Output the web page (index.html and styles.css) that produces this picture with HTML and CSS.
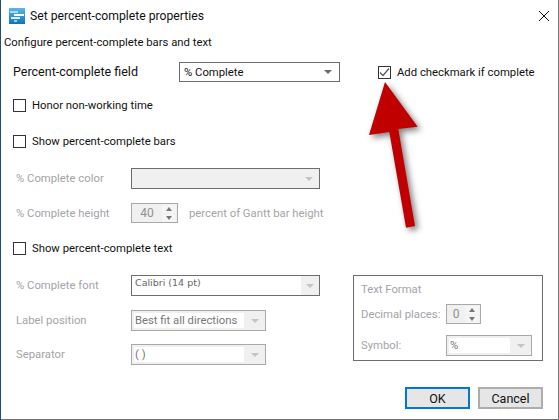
FILE: index.html
```html
<!DOCTYPE html>
<html lang="en">
<head>
    <meta charset="UTF-8">
    <title>Set percent-complete properties</title>
    <link rel="stylesheet" href="styles.css">
</head>
<body>
    <div class="dialog">
        <div class="title-bar">
            <svg class="app-icon" width="16" height="16" viewBox="0 0 16 16">
                <defs>
                    <linearGradient id="iconBlue" x1="0" y1="0" x2="0" y2="1">
                        <stop offset="0" stop-color="#5cb8ea"/>
                        <stop offset="1" stop-color="#0f74b8"/>
                    </linearGradient>
                </defs>
                <rect width="16" height="16" fill="url(#iconBlue)"/>
                <rect x="1" y="3" width="8" height="2" fill="#a9dbf5"/>
                <rect x="5" y="6" width="10" height="2" fill="#ffffff"/>
                <rect x="2" y="9" width="9" height="2" fill="#d8eefa"/>
                <rect x="5" y="12" width="3" height="2" fill="#8fcdf0"/>
            </svg>
            <span class="title-text">Set percent-complete properties</span>
            <svg class="close-icon" width="10" height="10" viewBox="0 0 10 10">
                <path d="M0 0L10 10M10 0L0 10" stroke="#111" stroke-width="1" fill="none"/>
            </svg>
        </div>

        <p class="intro">Configure percent-complete bars and text</p>

        <div class="field-row">
            <span class="field-label">Percent-complete field</span>
            <div class="select select-field">
                <span class="select-value">% Complete</span>
                <span class="select-arrow dark"></span>
            </div>
            <label class="check check-right">
                <span class="box">
                    <svg width="11" height="11" viewBox="0 0 11 11"><path d="M1 5.5L4 8.5L10 1.5" stroke="#555" stroke-width="1.2" fill="none"/></svg>
                </span>
                Add checkmark if complete
            </label>
        </div>

        <label class="check honor-row"><span class="box"></span>Honor non-working time</label>
        <label class="check bars-row"><span class="box"></span>Show percent-complete bars</label>

        <div class="row color-row">
            <span class="row-label">% Complete color</span>
            <div class="select select-wide disabled-fill"><span class="select-value"></span><span class="select-arrow"></span></div>
        </div>

        <div class="row height-row">
            <span class="row-label">% Complete height</span>
            <div class="spinner spinner-height">
                <span class="spinner-value">40</span>
                <span class="spinner-btns"><i class="up"></i><i class="down"></i></span>
            </div>
            <span class="muted height-note">percent of Gantt bar height</span>
        </div>

        <label class="check text-row"><span class="box"></span>Show percent-complete text</label>

        <div class="lower">
            <div class="lower-left">
                <div class="row">
                    <span class="row-label">% Complete font</span>
                    <div class="select select-wide font-select">
                        <span class="select-value font-value">Calibri (14 pt)</span>
                        <span class="arrow-cell"><span class="select-arrow"></span></span>
                    </div>
                </div>
                <div class="row position-row">
                    <span class="row-label">Label position</span>
                    <div class="select select-mid gray-border">
                        <span class="select-value inset">Best fit all directions</span>
                        <span class="select-arrow"></span>
                    </div>
                </div>
                <div class="row separator-row">
                    <span class="row-label">Separator</span>
                    <div class="select select-mid gray-border">
                        <span class="select-value inset">( )</span>
                        <span class="select-arrow"></span>
                    </div>
                </div>
            </div>

            <div class="group-box">
                <div class="group-title">Text Format</div>
                <div class="group-row">
                    <span class="group-label">Decimal places:</span>
                    <div class="spinner spinner-decimal">
                        <span class="spinner-value">0</span>
                        <span class="spinner-btns"><i class="up"></i><i class="down"></i></span>
                    </div>
                </div>
                <div class="group-row symbol-row">
                    <span class="group-label">Symbol:</span>
                    <div class="select select-symbol gray-border">
                        <span class="select-value inset">%</span>
                        <span class="select-arrow"></span>
                    </div>
                </div>
            </div>
        </div>

        <div class="buttons">
            <button class="btn btn-ok">OK</button>
            <button class="btn btn-cancel">Cancel</button>
        </div>

        <!-- annotation drawn over the dialog -->
        <svg class="arrow" width="60" height="160" viewBox="0 0 60 160">
            <polygon points="25,2 57.7,46.7 38.3,49 55,146 46,147.7 29.3,52 9,55" fill="#c00000"/>
        </svg>
    </div>
</body>
</html>
```

FILE: styles.css
```css
* {
    box-sizing: border-box;
}

body {
    margin: 0;
    width: 559px;
    height: 420px;
    overflow: hidden;
    background-color: #1b5270;
    font-family: Roboto, Arial, sans-serif;
    font-size: 11.3px;
    color: #111;
}

.dialog {
    position: relative;
    margin-left: 1px;
    width: 558px;
    height: 420px;
    background-color: #fff;
    border-right: 1px solid #7a7a7a;
    border-bottom: 1px solid #6f6f6f;
}

.title-bar {
    display: flex;
    align-items: center;
    height: 31px;
    padding-left: 8px;
}

.app-icon {
    flex: none;
}

.title-text {
    margin-left: 5px;
    font-size: 12.2px;
}

.close-icon {
    margin-left: auto;
    margin-right: 9px;
}

.intro {
    margin: 4px 0 0 3px;
    height: 16px;
    line-height: 16px;
}

.field-row {
    display: flex;
    align-items: center;
    margin-top: 11px;
    padding-left: 12px;
    height: 20px;
}

.field-label {
    width: 166px;
    margin-top: -1px;
    font-size: 12.5px;
}

.select {
    display: flex;
    align-items: center;
    height: 21px;
    border: 1px solid #6d6d6d;
    background-color: #fff;
}

.select-value {
    flex: 1;
    padding-left: 4px;
    white-space: nowrap;
}

.select-arrow {
    width: 0;
    height: 0;
    margin-right: 6px;
    border-left: 4px solid transparent;
    border-right: 4px solid transparent;
    border-top: 4px solid #c4c4c4;
}

.select-arrow.dark {
    border-top-color: #6a6a6a;
    margin-right: 7px;
}

.select-field {
    width: 161px;
    height: 20px;
}

.check {
    display: flex;
    align-items: center;
    height: 13px;
    margin-left: 12px;
}

.box {
    display: flex;
    align-items: center;
    justify-content: center;
    width: 13px;
    height: 13px;
    margin-right: 6px;
    border: 1px solid #333;
    background-color: #fff;
}

.check-right {
    margin-left: 38px;
}

.honor-row {
    margin-top: 17px;
}

.bars-row {
    margin-top: 23px;
}

.row {
    display: flex;
    align-items: center;
    height: 21px;
    padding-left: 15px;
    color: #a5a3a8;
}

.row-label {
    width: 115px;
}

.color-row {
    margin-top: 20px;
}

.height-row {
    margin-top: 14px;
    height: 20px;
}

.muted {
    color: #a5a3a8;
}

.height-note {
    margin-left: 11px;
}

.text-row {
    margin-top: 19px;
}

.select-wide {
    width: 189px;
}

.disabled-fill {
    background-color: #f0f0f0;
}

.spinner {
    display: flex;
    align-items: center;
    height: 20px;
    border: 1px solid #a9a9a9;
    background-color: #f0f0f0;
    color: #8f8f8f;
}

.spinner-height {
    width: 47px;
}

.spinner-decimal {
    width: 35px;
}

.spinner-value {
    flex: 1;
    text-align: center;
    font-size: 12px;
}

.spinner-btns {
    display: flex;
    flex-direction: column;
    gap: 1px;
    width: 14px;
    margin-right: 1px;
}

.spinner-btns i {
    display: flex;
    align-items: center;
    justify-content: center;
    height: 8px;
    background-color: #f5f5f5;
}

.spinner-btns i::before {
    content: "";
    border-left: 3px solid transparent;
    border-right: 3px solid transparent;
}

.spinner-btns .up::before {
    border-bottom: 4px solid #777;
}

.spinner-btns .down::before {
    border-top: 4px solid #777;
}

.lower {
    display: flex;
    margin-top: 20px;
}

.lower-left {
    width: 352px;
}

.font-select {
    align-items: stretch;
}

.font-value {
    font-family: "DejaVu Sans", sans-serif;
    font-size: 9.5px;
    line-height: 14px;
    padding-left: 3px;
    color: #666;
}

.arrow-cell {
    display: flex;
    align-items: center;
    justify-content: center;
    width: 18px;
    background-color: #f0f0f0;
}

.arrow-cell .select-arrow {
    margin: 0;
}

.position-row {
    margin-top: 14px;
}

.separator-row {
    margin-top: 13px;
}

.select-mid {
    width: 135px;
}

.gray-border {
    border-color: #a9a9a9;
    background-color: #f0f0f0;
}

.gray-border .select-value {
    margin: 2px 7px 2px 2px;
    padding: 0 0 0 1px;
    height: 15px;
    line-height: 15px;
    background-color: #fff;
    color: #777;
}

.group-box {
    width: 190px;
    height: 86px;
    padding: 6px 7px;
    border: 1px solid #6d6d6d;
    color: #a5a3a8;
}

.group-title {
    height: 16px;
    line-height: 16px;
}

.group-row {
    display: flex;
    align-items: center;
    margin-top: 6px;
    height: 20px;
}

.symbol-row {
    margin-top: 11px;
    height: 21px;
}

.group-label {
    width: 85px;
}

.select-symbol {
    width: 86px;
}

.buttons {
    position: absolute;
    right: 15px;
    bottom: 10px;
    display: flex;
    gap: 8px;
}

.btn {
    height: 22px;
    padding: 0;
    border: 2px solid #adadad;
    background-color: #e6e6e6;
    font-family: inherit;
    font-size: 12.5px;
    color: #111;
}

.btn-ok {
    width: 65px;
    border-color: #0078d7;
}

.btn-cancel {
    width: 65px;
}

.arrow {
    position: absolute;
    left: 359px;
    top: 80px;
    overflow: visible;
    filter: drop-shadow(3px 3px 3px rgba(0, 0, 0, 0.5));
}
```
